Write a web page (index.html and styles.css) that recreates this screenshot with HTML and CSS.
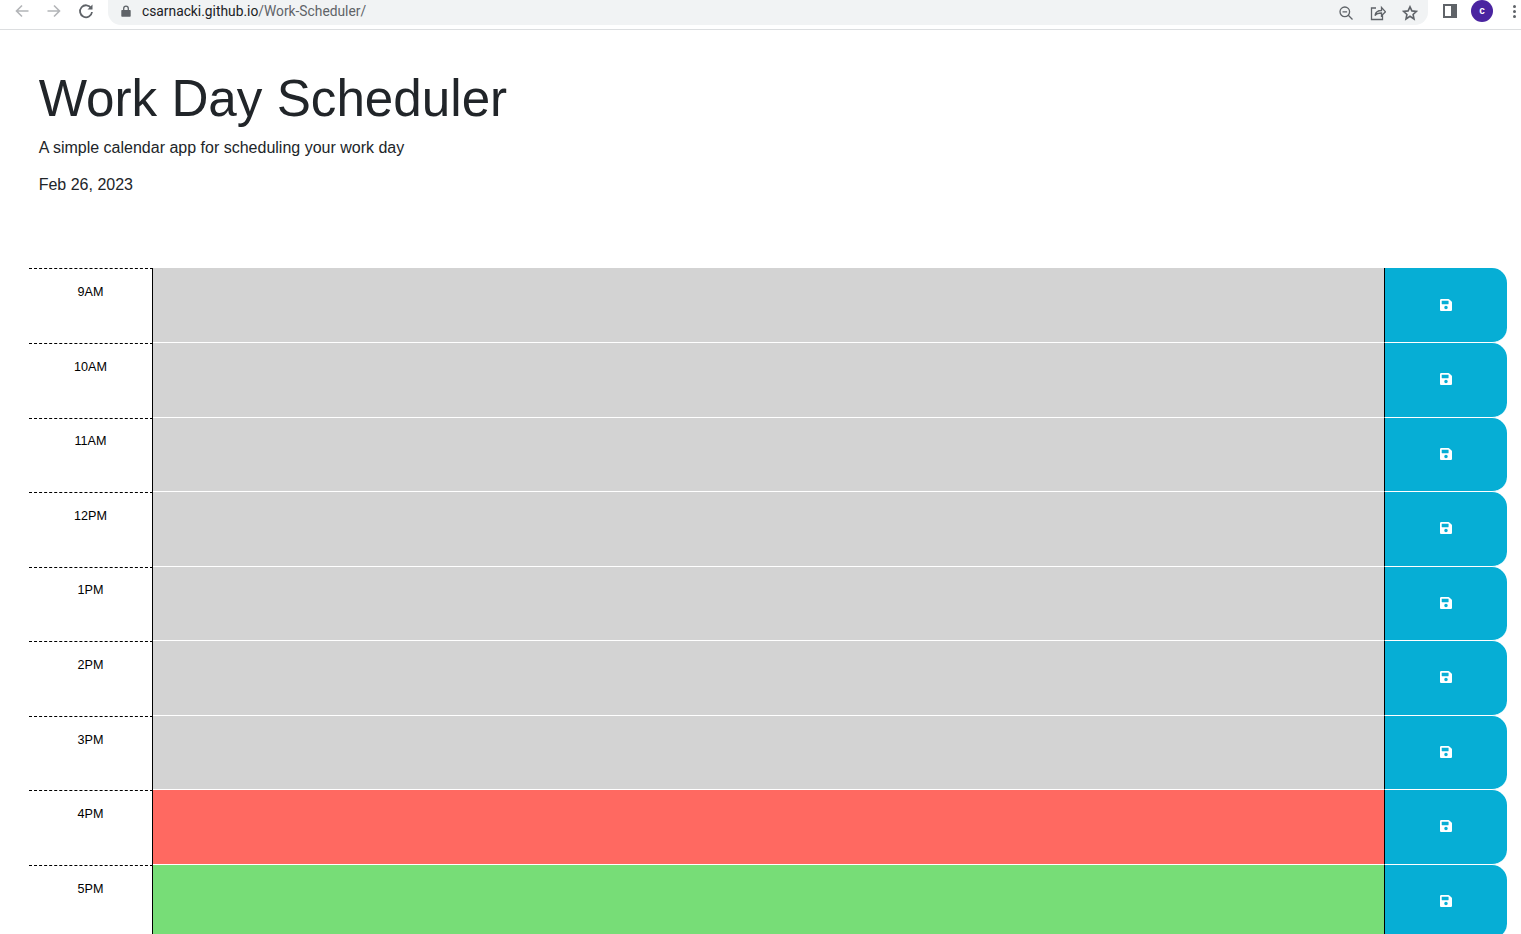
FILE: index.html
```html
<!DOCTYPE html>
<html lang="en">
<head>
    <meta charset="UTF-8">
    <title>Work Day Scheduler</title>
    <link rel="stylesheet" href="styles.css">
</head>
<body>
    <!-- browser toolbar -->
    <div class="toolbar">
        <svg class="tool-icon" viewBox="0 0 16 16"><path class="line-light" d="M14.5 8H2.5M8 2.5 2.5 8 8 13.5"/></svg>
        <svg class="tool-icon" viewBox="0 0 16 16"><path class="line-light" d="M1.5 8h12M8 2.5 13.5 8 8 13.5"/></svg>
        <svg class="tool-icon" viewBox="0 0 16 16"><path class="line-dark" d="M13.2 5.2A6 6 0 1 0 14 9"/><path class="fill-dark" d="M14.5 1.5v5h-5z"/></svg>
        <div class="address">
            <div class="address-left">
                <svg class="lock" viewBox="0 0 10 12"><path class="fill-dark" d="M1 5h8a.7.7 0 0 1 .7.7v5.3a.7.7 0 0 1-.7.7H1a.7.7 0 0 1-.7-.7V5.700A.7.7 0 0 1 1 5z"/><path class="line-thin" d="M2.700 5V3.400a2.300 2.300 0 0 1 4.600 0V5"/></svg>
                <span class="url">csarnacki.github.io<span class="url-path">/Work-Scheduler/</span></span>
            </div>
            <div class="address-right">
                <svg class="small-icon" viewBox="0 0 16 16"><circle class="line-thin" cx="6.800" cy="6.800" r="4.800"/><path class="line-thin" d="M4.500 6.800h4.600M10.300 10.300l4.200 4.200"/></svg>
                <svg class="small-icon" viewBox="0 0 16 16"><path class="line-thin" d="M6 3H1.500v11.500h11V10M5 10.500c.5-3 3-5 6.500-5V2.500l4 4.300-4 4V8C9 8 6.500 8.500 5 10.500z"/></svg>
                <svg class="small-icon" viewBox="0 0 16 16"><path class="line-star" d="M8 1.800l1.900 4.100 4.500.5-3.300 3.100.9 4.500L8 11.300l-4 2.700.9-4.500L1.600 6.400l4.500-.5z"/></svg>
            </div>
        </div>
        <div class="side-icon"></div>
        <div class="avatar">c</div>
        <div class="dots"><span></span><span></span><span></span></div>
    </div>

    <header class="page-header">
        <h1>Work Day Scheduler</h1>
        <p class="lead">A simple calendar app for scheduling your work day</p>
        <p class="today">Feb 26, 2023</p>
    </header>

    <div class="planner">
        <div class="row"><div class="hour">9AM</div><textarea class="task past"></textarea><button class="save"><svg viewBox="0 0 448 512"><path d="M433.900 129.900l-83.900-83.900A48 48 0 0 0 316.100 32H48C21.500 32 0 53.500 0 80v352c0 26.500 21.500 48 48 48h352c26.500 0 48-21.500 48-48V163.900a48 48 0 0 0-14.100-34zM224 416c-35.300 0-64-28.700-64-64 0-35.300 28.700-64 64-64s64 28.700 64 64c0 35.300-28.700 64-64 64zm96-304.500V212c0 6.600-5.400 12-12 12H76c-6.600 0-12-5.400-12-12V108c0-6.600 5.400-12 12-12h228.500c3.200 0 6.200 1.300 8.500 3.500l3.500 3.500c2.200 2.200 3.500 5.300 3.500 8.500z"/></svg></button></div>
        <div class="row"><div class="hour">10AM</div><textarea class="task past"></textarea><button class="save"><svg viewBox="0 0 448 512"><path d="M433.900 129.900l-83.900-83.900A48 48 0 0 0 316.100 32H48C21.500 32 0 53.500 0 80v352c0 26.500 21.500 48 48 48h352c26.500 0 48-21.500 48-48V163.900a48 48 0 0 0-14.100-34zM224 416c-35.300 0-64-28.700-64-64 0-35.300 28.700-64 64-64s64 28.700 64 64c0 35.300-28.700 64-64 64zm96-304.500V212c0 6.600-5.400 12-12 12H76c-6.600 0-12-5.400-12-12V108c0-6.600 5.400-12 12-12h228.500c3.200 0 6.200 1.300 8.500 3.500l3.500 3.500c2.200 2.200 3.500 5.300 3.500 8.500z"/></svg></button></div>
        <div class="row"><div class="hour">11AM</div><textarea class="task past"></textarea><button class="save"><svg viewBox="0 0 448 512"><path d="M433.900 129.900l-83.900-83.900A48 48 0 0 0 316.100 32H48C21.500 32 0 53.500 0 80v352c0 26.500 21.500 48 48 48h352c26.500 0 48-21.500 48-48V163.900a48 48 0 0 0-14.100-34zM224 416c-35.300 0-64-28.700-64-64 0-35.300 28.700-64 64-64s64 28.700 64 64c0 35.300-28.700 64-64 64zm96-304.500V212c0 6.600-5.400 12-12 12H76c-6.600 0-12-5.400-12-12V108c0-6.600 5.400-12 12-12h228.500c3.200 0 6.200 1.300 8.500 3.500l3.500 3.500c2.200 2.200 3.500 5.300 3.500 8.500z"/></svg></button></div>
        <div class="row"><div class="hour">12PM</div><textarea class="task past"></textarea><button class="save"><svg viewBox="0 0 448 512"><path d="M433.900 129.900l-83.900-83.900A48 48 0 0 0 316.100 32H48C21.500 32 0 53.500 0 80v352c0 26.500 21.500 48 48 48h352c26.500 0 48-21.500 48-48V163.900a48 48 0 0 0-14.100-34zM224 416c-35.300 0-64-28.700-64-64 0-35.300 28.700-64 64-64s64 28.700 64 64c0 35.300-28.700 64-64 64zm96-304.500V212c0 6.600-5.400 12-12 12H76c-6.600 0-12-5.400-12-12V108c0-6.600 5.400-12 12-12h228.500c3.200 0 6.200 1.300 8.500 3.500l3.500 3.500c2.200 2.200 3.500 5.300 3.500 8.500z"/></svg></button></div>
        <div class="row"><div class="hour">1PM</div><textarea class="task past"></textarea><button class="save"><svg viewBox="0 0 448 512"><path d="M433.900 129.900l-83.900-83.900A48 48 0 0 0 316.100 32H48C21.500 32 0 53.500 0 80v352c0 26.500 21.500 48 48 48h352c26.500 0 48-21.500 48-48V163.900a48 48 0 0 0-14.100-34zM224 416c-35.300 0-64-28.700-64-64 0-35.300 28.700-64 64-64s64 28.700 64 64c0 35.300-28.700 64-64 64zm96-304.500V212c0 6.600-5.400 12-12 12H76c-6.600 0-12-5.400-12-12V108c0-6.600 5.400-12 12-12h228.500c3.200 0 6.200 1.300 8.500 3.500l3.500 3.500c2.200 2.200 3.500 5.300 3.500 8.500z"/></svg></button></div>
        <div class="row"><div class="hour">2PM</div><textarea class="task past"></textarea><button class="save"><svg viewBox="0 0 448 512"><path d="M433.900 129.900l-83.900-83.900A48 48 0 0 0 316.100 32H48C21.500 32 0 53.500 0 80v352c0 26.500 21.500 48 48 48h352c26.500 0 48-21.500 48-48V163.900a48 48 0 0 0-14.100-34zM224 416c-35.300 0-64-28.700-64-64 0-35.300 28.700-64 64-64s64 28.700 64 64c0 35.300-28.700 64-64 64zm96-304.500V212c0 6.600-5.400 12-12 12H76c-6.600 0-12-5.400-12-12V108c0-6.600 5.400-12 12-12h228.500c3.200 0 6.200 1.300 8.500 3.500l3.500 3.500c2.200 2.200 3.500 5.300 3.500 8.500z"/></svg></button></div>
        <div class="row"><div class="hour">3PM</div><textarea class="task past"></textarea><button class="save"><svg viewBox="0 0 448 512"><path d="M433.900 129.900l-83.900-83.900A48 48 0 0 0 316.100 32H48C21.500 32 0 53.500 0 80v352c0 26.500 21.500 48 48 48h352c26.500 0 48-21.500 48-48V163.900a48 48 0 0 0-14.100-34zM224 416c-35.300 0-64-28.700-64-64 0-35.300 28.700-64 64-64s64 28.700 64 64c0 35.300-28.700 64-64 64zm96-304.500V212c0 6.600-5.400 12-12 12H76c-6.600 0-12-5.400-12-12V108c0-6.600 5.400-12 12-12h228.500c3.200 0 6.200 1.300 8.500 3.500l3.500 3.500c2.200 2.200 3.500 5.300 3.500 8.500z"/></svg></button></div>
        <div class="row"><div class="hour">4PM</div><textarea class="task present"></textarea><button class="save"><svg viewBox="0 0 448 512"><path d="M433.900 129.900l-83.900-83.900A48 48 0 0 0 316.100 32H48C21.500 32 0 53.500 0 80v352c0 26.500 21.500 48 48 48h352c26.500 0 48-21.500 48-48V163.900a48 48 0 0 0-14.100-34zM224 416c-35.300 0-64-28.700-64-64 0-35.300 28.700-64 64-64s64 28.700 64 64c0 35.300-28.700 64-64 64zm96-304.500V212c0 6.600-5.400 12-12 12H76c-6.600 0-12-5.400-12-12V108c0-6.600 5.400-12 12-12h228.500c3.200 0 6.200 1.300 8.500 3.500l3.500 3.500c2.200 2.200 3.500 5.300 3.500 8.500z"/></svg></button></div>
        <div class="row"><div class="hour">5PM</div><textarea class="task future"></textarea><button class="save"><svg viewBox="0 0 448 512"><path d="M433.900 129.900l-83.900-83.900A48 48 0 0 0 316.100 32H48C21.500 32 0 53.500 0 80v352c0 26.500 21.500 48 48 48h352c26.500 0 48-21.500 48-48V163.900a48 48 0 0 0-14.100-34zM224 416c-35.300 0-64-28.700-64-64 0-35.300 28.700-64 64-64s64 28.700 64 64c0 35.300-28.700 64-64 64zm96-304.500V212c0 6.600-5.400 12-12 12H76c-6.600 0-12-5.400-12-12V108c0-6.600 5.400-12 12-12h228.500c3.200 0 6.200 1.300 8.500 3.500l3.500 3.500c2.200 2.200 3.500 5.300 3.500 8.500z"/></svg></button></div>
    </div>
</body>
</html>
```

FILE: styles.css
```css
* {
    margin: 0;
    padding: 0;
    box-sizing: border-box;
}

html, body {
    height: 934px;
    overflow: hidden;
}

body {
    font-family: "Liberation Sans", Arial, sans-serif;
    background: white;
    color: #212529;
}

/* toolbar */
.toolbar {
    height: 30px;
    display: flex;
    align-items: flex-start;
    border-bottom: 1px solid #dcdee0;
    padding-left: 14px;
    background: white;
}

.tool-icon {
    width: 16px;
    height: 16px;
    margin-top: 3px;
    margin-right: 16px;
}

.line-light {
    fill: none;
    stroke: #b3b5b8;
    stroke-width: 1.6;
}

.line-dark {
    fill: none;
    stroke: #5f6368;
    stroke-width: 1.800;
}

.fill-dark {
    fill: #5f6368;
}

.line-thin {
    fill: none;
    stroke: #5f6368;
    stroke-width: 1.300;
}

.line-star {
    fill: none;
    stroke: #5f6368;
    stroke-width: 1.600;
}

.address {
    width: 1320px;
    height: 25px;
    margin-left: -2px;
    background: #f1f3f4;
    border-radius: 0 0 13px 13px;
    display: flex;
    justify-content: space-between;
    align-items: center;
    padding: 0 10px 0 13px;
}

.address-left {
    display: flex;
    align-items: center;
    padding-bottom: 3px;
}

.lock {
    width: 10px;
    height: 12px;
    margin-right: 11px;
}

.url {
    font-family: "Roboto", "Liberation Sans", sans-serif;
    font-size: 13.800px;
    color: #202124;
}

.url-path {
    color: #5f6368;
}

.address-right {
    display: flex;
    gap: 16px;
}

.small-icon {
    width: 16px;
    height: 16px;
}

.side-icon {
    width: 14px;
    height: 14px;
    margin: 4px 0 0 15px;
    border: 2px solid #5f6368;
    border-right-width: 6px;
    background: white;
}

.avatar {
    width: 22px;
    height: 22px;
    margin: 0 0 0 14px;
    border-radius: 50%;
    background: #4a24a0;
    color: white;
    font-size: 10px;
    font-weight: bold;
    text-align: center;
    line-height: 22px;
}

.dots {
    margin: 5px 0 0 20px;
    display: flex;
    flex-direction: column;
    gap: 2px;
}

.dots span {
    width: 3px;
    height: 3px;
    border-radius: 50%;
    background: #5f6368;
}

/* page header */
.page-header {
    padding: 37px 38.700px 0;
    height: 238.450px;
}

.page-header h1 {
    font-size: 51.200px;
    font-weight: 300;
    line-height: 64px;
    margin-bottom: 5px;
}

.lead {
    font-size: 16px;
    line-height: 24px;
    margin-bottom: 13px;
}

.today {
    font-size: 16px;
    line-height: 24px;
}

/* time blocks */
.planner {
    padding: 0 14px 0 29px;
}

.row {
    display: flex;
    height: 74.560px;
}

.hour {
    width: 124px;
    border-top: 1px dashed black;
    border-right: 1.500px solid black;
    padding-top: 14.800px;
    text-align: center;
    font-size: 12.600px;
    line-height: 16px;
    color: black;
}

.task {
    flex: 1;
    height: 100%;
    border: none;
    border-bottom: 1px solid white;
    resize: none;
    border-radius: 0;
    display: block;
}

.past {
    background: #d3d3d3;
}

.present {
    background: #ff6961;
}

.future {
    background: #77dd77;
}

.save {
    width: 123px;
    height: 100%;
    background: #06aed5;
    border: none;
    border-left: 1.500px solid black;
    border-bottom: 1px solid white;
    border-radius: 0 15px 15px 0;
    display: flex;
    align-items: center;
    justify-content: center;
}

.save svg {
    width: 12px;
    height: 14px;
    margin-bottom: 1.200px;
    fill: white;
}
```
